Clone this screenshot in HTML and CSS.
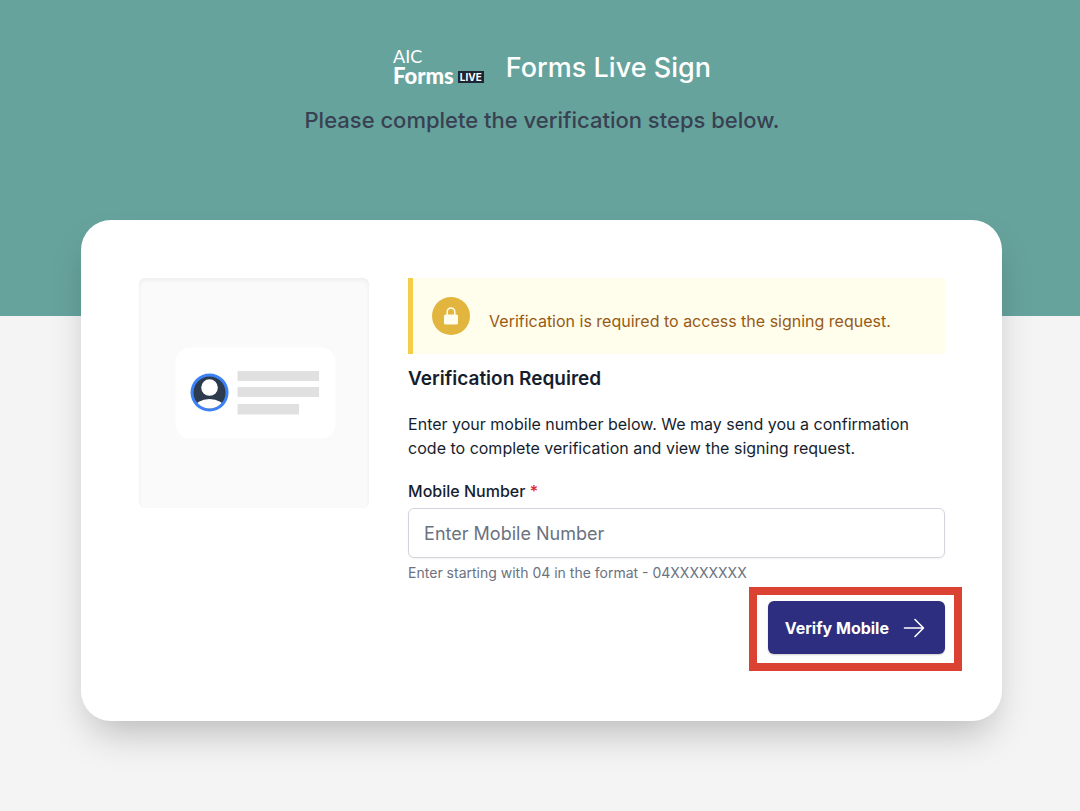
FILE: index.html
```html
<!DOCTYPE html>
<html lang="en">
<head>
<meta charset="utf-8">
<meta name="viewport" content="width=device-width, initial-scale=1">
<title>Forms Live Sign</title>
<link rel="stylesheet" href="styles.css">
</head>
<body>
<header class="hero">
  <div class="brand">
    <div class="logo">
      <span class="logo-top">AIC</span>
      <span class="logo-row"><span class="logo-name">Forms</span><span class="logo-tag">LIVE</span></span>
    </div>
    <h1 class="title">Forms Live Sign</h1>
  </div>
  <p class="subtitle">Please complete the verification steps below.</p>
</header>
<main class="card">
  <div class="picture">
    <svg class="picture-art" viewBox="0 0 230 230" aria-hidden="true">
      <rect x="36.500" y="69.500" width="160" height="91" rx="15" fill="#fff"/>
      <circle cx="70.500" cy="114.500" r="19" fill="#3b82f6"/>
      <clipPath id="face"><circle cx="70.500" cy="114.500" r="16"/></clipPath>
      <g clip-path="url(#face)">
        <rect x="54" y="98" width="33" height="33" fill="#2d3b4e"/>
        <circle cx="70.500" cy="109.500" r="8.300" fill="#fff"/>
        <ellipse cx="70.500" cy="130" rx="15" ry="9" fill="#fff"/>
      </g>
      <path fill="#e0e0e0" d="M98.500 93H180v10H98.500zM98.500 109H180v10H98.500zM98.500 126H160v10.500H98.500z"/>
    </svg>
  </div>
  <form class="content">
    <div class="notice" role="status">
      <span class="notice-icon">
        <svg viewBox="0 0 20 20" width="20" height="20" aria-hidden="true">
          <path fill="none" stroke="#fffdeb" stroke-width="1.500" d="M6.200 10V5.700a3.800 3.800 0 0 1 7.600 0V10"/>
          <rect x="3" y="8.500" width="14" height="10" rx="1.600" fill="#fffdeb"/>
        </svg>
      </span>
      <p class="notice-text">Verification is required to access the signing request.</p>
    </div>
    <h2 class="heading">Verification Required</h2>
    <p class="copy">Enter your mobile number below. We may send you a confirmation code to complete verification and view the signing request.</p>
    <label class="label" for="mobile">Mobile Number <span class="required">*</span></label>
    <input class="field" id="mobile" type="tel" placeholder="Enter Mobile Number" aria-describedby="hint" required>
    <p class="hint" id="hint">Enter starting with 04 in the format - 04XXXXXXXX</p>
    <div class="actions">
      <button class="verify" type="submit">Verify Mobile
        <svg width="22" height="20" viewBox="0 0 22 20" fill="none" stroke="#fff" stroke-width="1.600" stroke-linecap="round" stroke-linejoin="round" aria-hidden="true"><path d="M1.500 10h19M12 1.500l8.500 8.500-8.500 8.500"/></svg>
      </button>
    </div>
  </form>
</main>
</body>
</html>
```
FILE: styles.css
```css
* {
  box-sizing: border-box;
}

body {
  margin: 0;
  background: #f4f4f4;
  color: #161e2e;
  font-family: Inter, "Liberation Sans", sans-serif;
  font-size: 16px;
  line-height: 24px;
}

h1,
h2,
p {
  margin: 0;
}

.hero {
  display: flex;
  flex-direction: column;
  align-items: center;
  gap: 16px;
  padding: 48px 16px 180px 20px;
  background: #67a39d;
}

.brand {
  display: flex;
  align-items: center;
  gap: 22px;
  height: 40px;
  padding-left: 20px;
}

.logo {
  display: flex;
  flex-direction: column;
  padding-bottom: 5px;
  color: #fff;
  font-family: Lato, sans-serif;
}

.logo-top {
  font-size: 18px;
  line-height: 19px;
}

.logo-row {
  display: flex;
  align-items: center;
  gap: 4px;
}

.logo-name {
  font-size: 22px;
  font-weight: 900;
  line-height: 19px;
}

.logo-tag {
  margin-top: 4px;
  padding: 0 2px;
  background: #1d2433;
  font-family: Inter, sans-serif;
  font-size: 10px;
  font-weight: 700;
  line-height: 12px;
}

.title {
  color: #fff;
  font-size: 27px;
  font-weight: 500;
  line-height: 40px;
}

.subtitle {
  color: #374151;
  font-size: 22px;
  font-weight: 500;
  line-height: 32px;
  text-align: center;
}

.card {
  display: grid;
  grid-template-columns: 3fr 7fr;
  align-items: start;
  gap: 39px;
  margin: -96px 78px 88px 81px;
  padding: 58px 57px 67px 58px;
  border-radius: 30px;
  background: #fff;
  box-shadow: 0 20px 38px -10px rgba(0, 0, 0, 0.25);
}

.picture {
  border-radius: 6px;
  background: #fafafa;
  box-shadow: inset 0 2px 4px rgba(0, 0, 0, 0.06);
}

.picture-art {
  display: block;
  width: 100%;
}

.content {
  display: flex;
  flex-direction: column;
}

.notice {
  display: flex;
  align-items: flex-start;
  gap: 19px;
  padding: 19px;
  border-left: 5px solid #f6cd46;
  background: #fffdeb;
}

.notice-icon {
  display: flex;
  flex: none;
  align-items: center;
  justify-content: center;
  width: 38px;
  height: 38px;
  border-radius: 50%;
  background: #e2b53e;
}

.notice-text {
  padding-top: 12px;
  color: #975a16;
}

.heading {
  margin-top: 10px;
  font-size: 19px;
  font-weight: 600;
  line-height: 29px;
}

.copy {
  margin-top: 19px;
}

.label {
  margin-top: 19px;
  font-weight: 500;
}

.required {
  color: #e02424;
}

.field {
  width: 100%;
  height: 50px;
  margin-top: 5px;
  padding: 0 15px;
  border: 1px solid #d2d6dc;
  border-radius: 6px;
  background: #fff;
  box-shadow: 0 1px 2px rgba(0, 0, 0, 0.05);
  color: inherit;
  font: inherit;
  font-size: 18px;
}

.field::placeholder {
  color: #6b7280;
  opacity: 1;
}

.hint {
  margin-top: 5px;
  color: #6b7280;
  font-size: 14px;
  line-height: 20px;
}

.actions {
  display: flex;
  justify-content: flex-end;
  margin-top: 18px;
}

.verify {
  position: relative;
  display: flex;
  align-items: center;
  gap: 14px;
  height: 53px;
  padding: 0 20px 0 17px;
  border: 0;
  border-radius: 6px;
  background: #2d2e7f;
  box-shadow: 0 1px 2px rgba(0, 0, 0, 0.2);
  color: #fff;
  font: inherit;
  font-weight: 700;
}

/* Highlight frame around the primary action */
.verify::after {
  content: "";
  position: absolute;
  inset: -14px -17px -17px -19px;
  border: 8px solid #dc4233;
}
```
